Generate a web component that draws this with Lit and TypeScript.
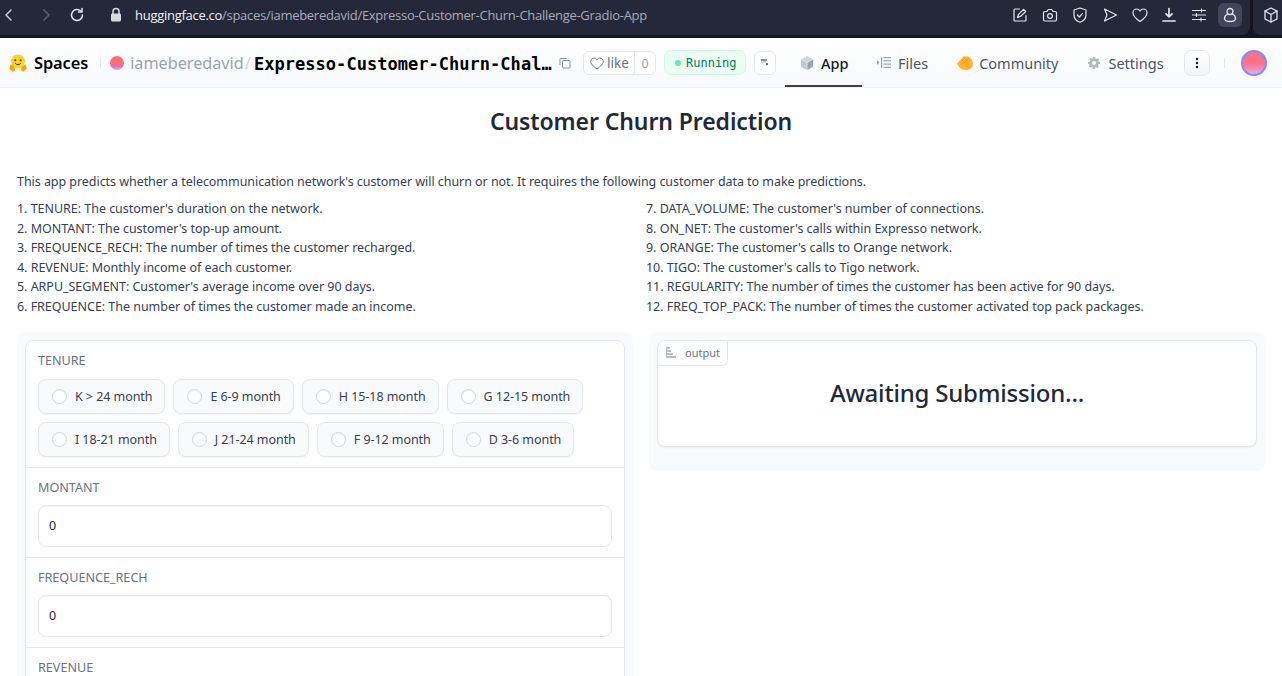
import { LitElement, html, css, svg } from "lit";
import { customElement } from "lit/decorators.js";

const stroke = (w: number, inner: unknown) => html`<svg class="ic" width="18" height="18" viewBox="0 0 18 18" fill="none" stroke="#e4e6ee" stroke-width="${w}" stroke-linecap="round" stroke-linejoin="round">${inner}</svg>`;

const TOOL_ICONS = [
  svg`<path d="M15 9.500V14a1 1 0 0 1-1 1H4a1 1 0 0 1-1-1V4a1 1 0 0 1 1-1h4.500"/><path d="M6.500 11.500l1-3 5-5.200 2.200 2.200-5.200 5-3 1z"/>`,
  svg`<path d="M2.500 7a1.500 1.500 0 0 1 1.500-1.500h2L7.300 3.500h3.400L12 5.500h2A1.500 1.500 0 0 1 15.500 7v6.500A1.500 1.500 0 0 1 14 15H4a1.500 1.500 0 0 1-1.500-1.500z"/><circle cx="9" cy="10" r="2.400"/>`,
  svg`<path d="M9 2l6 2v5c0 3.600-2.500 6-6 7.300C5.500 15 3 12.600 3 9V4z"/><path d="M6.400 9l2 2 3.200-3.600"/>`,
  svg`<path d="M3.500 3l12 6-12 6 2.500-6z"/>`,
  svg`<path d="M9 15.500C4.500 12.500 2 10 2 6.800 2 4.600 3.700 3 5.600 3 7 3 8.300 3.800 9 5c.7-1.200 2-2 3.400-2C14.300 3 16 4.600 16 6.800c0 3.200-2.500 5.700-7 8.700z"/>`,
  svg`<path d="M9 2.500v8M6 7.800L9 10.800l3-3" stroke-width="1.700"/><path d="M3 15h12" stroke-width="1.700"/>`,
  svg`<path d="M2.500 4.500h13M2.500 9h13M2.500 13.500h13"/><path d="M11.500 3v3M6.500 7.500v3M11 12v3"/>`,
];

const LEFT_ITEMS = [
  "1. TENURE: The customer's duration on the network.",
  "2. MONTANT: The customer's top-up amount.",
  "3. FREQUENCE_RECH: The number of times the customer recharged.",
  "4. REVENUE: Monthly income of each customer.",
  "5. ARPU_SEGMENT: Customer's average income over 90 days.",
  "6. FREQUENCE: The number of times the customer made an income.",
];
const RIGHT_ITEMS = [
  "7. DATA_VOLUME: The customer's number of connections.",
  "8. ON_NET: The customer's calls within Expresso network.",
  "9. ORANGE: The customer's calls to Orange network.",
  "10. TIGO: The customer's calls to Tigo network.",
  "11. REGULARITY: The number of times the customer has been active for 90 days.",
  "12. FREQ_TOP_PACK: The number of times the customer activated top pack packages.",
];
const RADIOS = [
  "K > 24 month", "E 6-9 month", "H 15-18 month", "G 12-15 month",
  "I 18-21 month", "J 21-24 month", "F 9-12 month", "D 3-6 month",
];

@customElement("app-root")
export class AppRoot extends LitElement {
  static styles = css`
    :host { display: block; height: 676px; overflow: hidden; background: #fff; font-family: "Noto Sans", sans-serif; color: #1f2937; font-size: 13px; }
    .chrome { height: 38px; background: #14151f; display: flex; }
    .bar { flex: 1; height: 35px; box-sizing: border-box; padding: 0 0 5px 1px; background: #252838; border-bottom-right-radius: 8px; display: flex; align-items: center; }
    .side { width: 29px; margin-left: 3px; height: 35px; box-sizing: border-box; padding: 0 0 5px 9px; background: #252838; border-bottom-left-radius: 8px; display: flex; align-items: center; }
    .nav { display: flex; align-items: center; justify-content: center; width: 16px; }
    .nav.fwd { margin-left: 21px; }
    .nav.reload { margin-left: 15px; }
    .nav.lock { margin-left: 23px; }
    .url { margin-left: 11px; font-family: "Open Sans", sans-serif; font-size: 13px; color: #a7abb8; white-space: nowrap; letter-spacing: -0.28px; flex: 1; }
    .url b { font-weight: 400; color: #f1f2f6; }
    .tools { display: flex; align-items: center; gap: 11.800px; margin-right: 8px; }
    .active { width: 24px; height: 24px; margin-left: -2px; border-radius: 6px; background: #42465c; display: flex; align-items: center; justify-content: center; }
    .ic { display: block; }

    .head { height: 49px; background: linear-gradient(#fff, #f8f9fb); border-bottom: 1px solid #f0f1f4; display: flex; align-items: center; padding-left: 9px; color: #4b5563; }
    .head > * { flex: none; }
    .spaces { margin-left: 7px; font-size: 16.400px; font-weight: 600; color: #000; letter-spacing: -0.1px; }
    .vr { width: 1px; height: 10px; background: #e5e7eb; }
    .vr.first { margin-left: 12px; }
    .owner-av { width: 14px; height: 14px; border-radius: 50%; background: linear-gradient(#fb6f6f 45%, #e36fa8 70%, #d9a5e8); margin-left: 9px; }
    .owner { margin-left: 6px; font-size: 16.200px; color: #9ca3af; }
    .slash { margin-left: 1px; font-size: 17px; color: #d1d5db; }
    .repo { margin: 3px 0 0 3px; width: 298px; overflow: hidden; text-overflow: ellipsis; white-space: nowrap; font-family: "DejaVu Sans Mono", monospace; font-weight: 700; font-size: 17px; color: #000; letter-spacing: 0.03px; }
    .copy { margin-left: 7px; }
    .like { margin: 1px 0 0 12px; height: 22px; width: 71px; border: 1px solid #e5e7eb; border-radius: 6px; display: flex; align-items: center; font-size: 13.500px; background: #fff; color: #6b7280; }
    .like .a { flex: 1; display: flex; align-items: center; gap: 3px; padding-left: 6px; border-right: 1px solid #e5e7eb; height: 100%; }
    .like .b { width: 20px; text-align: center; font-size: 12.500px; color: #9ca3af; }
    .run { margin-left: 8px; height: 23px; width: 70px; border: 1px solid #d1fae5; border-radius: 7px; background: #ecfdf5; display: flex; align-items: center; gap: 5px; padding-left: 10px; font-family: "DejaVu Sans Mono", monospace; font-size: 12px; color: #047857; white-space: nowrap; }
    .dot { width: 6px; height: 6px; border-radius: 50%; background: #6ee7b7; }
    .sq { margin: 1px 0 0 8px; width: 20px; height: 22px; border: 1px solid #e5e7eb; border-radius: 6px; background: #fff; display: flex; align-items: center; justify-content: center; }
    .tab { height: 49px; display: flex; align-items: center; font-size: 14.500px; color: #4b5563; position: relative; box-sizing: border-box; }
    .tab svg { flex: none; }
    .tab.app { margin-left: 9px; width: 77px; padding-left: 16px; gap: 8px; color: #111827; font-weight: 500; border-bottom: 2px solid #374151; padding-top: 2px; }
    .tab.files { margin-left: 15px; gap: 7px; }
    .tab.comm { margin-left: 29px; gap: 6px; }
    .tab.set { margin-left: 30px; gap: 8px; }
    .menu { margin-left: 20px; width: 24px; height: 24px; border: 1px solid #e5e7eb; border-radius: 7px; background: linear-gradient(#fff, #f3f4f6); display: flex; align-items: center; justify-content: center; }
    .vr2 { margin-left: 14px; }
    .me { margin-left: 16px; width: 22px; height: 22px; border-radius: 50%; border: 2px solid #818cf8; background: linear-gradient(#fb7185 50%, #f08ab4 75%, #d8b4f0); }

    main { padding: 0 17px; }
    h1 { margin: 0; padding-top: 17px; height: 37px; line-height: 32px; text-align: center; font-size: 23px; font-weight: 600; color: #1f2937; letter-spacing: -0.1px; }
    .intro { margin: 30px 0 0; height: 20px; line-height: 20px; font-size: 12.500px; color: #374151; letter-spacing: -0.05px; white-space: nowrap; }
    .cols { margin-top: 7px; display: grid; grid-template-columns: 629px 1fr; font-size: 12.500px; line-height: 19.600px; color: #374151; letter-spacing: -0.03px; white-space: nowrap; }
    .panels { margin-top: 15px; display: grid; grid-template-columns: 616px 616px; gap: 16px; align-items: start; }
    .panel { background: #f9fafb; border-radius: 8px; padding: 8px; }
    .panel.output { padding-bottom: 24px; }
    .card { background: #fff; border: 1px solid #e5e7eb; border-radius: 8px; }
    .field { padding: 11px 12px 10px; border-top: 1px solid #e5e7eb; }
    .field:first-child { border-top: 0; }
    .lab { font-size: 12.600px; line-height: 18px; color: #6b7280; margin-bottom: 8px; white-space: nowrap; }
    .field:first-child .lab { margin-bottom: 9px; }
    .radios { display: flex; flex-wrap: wrap; gap: 8px; }
    .pill { height: 35px; box-sizing: border-box; display: flex; align-items: center; gap: 8px; padding: 0 12px 0 13px; background: #f9fafb; border: 1px solid #e5e7eb; border-radius: 8px; box-shadow: 0 1px 1px rgba(0,0,0,.04); font-size: 12.500px; color: #374151; white-space: nowrap; letter-spacing: -0.06px; }
    .circle { width: 15px; height: 15px; box-sizing: border-box; border: 1px solid #d1d5db; border-radius: 50%; background: #fff; box-shadow: inset 0 1px 1px rgba(0,0,0,.05); }
    .input { height: 42px; box-sizing: border-box; border: 1px solid #e5e7eb; border-radius: 8px; padding: 0 10px; display: flex; align-items: center; font-size: 12.500px; color: #1f2937; box-shadow: inset 0 1px 2px rgba(0,0,0,.04); }
    .out { height: 105px; position: relative; box-shadow: 0 1px 2px rgba(0,0,0,.05); display: flex; justify-content: center; align-items: flex-start; }
    .tag { position: absolute; left: 0; top: 0; height: 25px; width: 70px; box-sizing: border-box; border-right: 1px solid #e5e7eb; border-bottom: 1px solid #e5e7eb; border-radius: 0 0 6px 0; display: flex; align-items: center; gap: 9px; padding-left: 8px; font-size: 11px; color: #6b7280; }
    .await { margin-top: 33px; line-height: 38px; font-size: 24px; font-weight: 500; color: #1f2937; letter-spacing: -0.2px; }
  `;

  render() {
    return html`
      <div class="chrome">
        <div class="bar">
          <span class="nav"><svg width="16" height="16" viewBox="0 0 16 16" fill="none" stroke="#c9ccd6" stroke-width="1.500" stroke-linecap="round" stroke-linejoin="round"><path d="M10 3L5 8l5 5"/></svg></span>
          <span class="nav fwd"><svg width="16" height="16" viewBox="0 0 16 16" fill="none" stroke="#5c6070" stroke-width="1.500" stroke-linecap="round" stroke-linejoin="round"><path d="M6 3l5 5-5 5"/></svg></span>
          <span class="nav reload"><svg width="16" height="16" viewBox="0 0 16 16" fill="none" stroke="#e4e6ee" stroke-width="1.500" stroke-linecap="round" stroke-linejoin="round"><path d="M13.500 8a5.500 5.500 0 1 1-1.700-4"/><path d="M13 1.500V5H9.500" /></svg></span>
          <span class="nav lock"><svg width="14" height="16" viewBox="0 0 14 16"><path d="M4 7V4.500a3 3 0 0 1 6 0V7" fill="none" stroke="#d9dbe3" stroke-width="1.500"/><rect x="2" y="6.500" width="10" height="8" rx="1.500" fill="#d9dbe3"/></svg></span>
          <span class="url"><b>huggingface.co</b>/spaces/iameberedavid/Expresso-Customer-Churn-Challenge-Gradio-App</span>
          <div class="tools">
            ${TOOL_ICONS.map((p) => stroke(1.2, p))}
            <span class="active">${stroke(1.3, svg`<circle cx="9" cy="5.500" r="3"/><path d="M6.800 8C4.500 9 3.500 10.500 3.500 12.500c0 2 1.500 3 5.500 3s5.500-1 5.500-3c0-2-1-3.500-3.300-4.500"/>`)}</span>
          </div>
        </div>
        <div class="side">${stroke(1.300, svg`<path d="M9 2l6 3v8l-6 3-6-3V5z"/><path d="M3 5l6 3.500L15 5M9 8.500V16"/>`)}</div>
      </div>

      <header class="head">
        <svg width="18" height="18" viewBox="0 0 18 18">
          <circle cx="9" cy="7.500" r="7" fill="#ffd21e"/>
          <circle cx="6.300" cy="6.300" r="1" fill="#32343d"/><circle cx="11.700" cy="6.300" r="1" fill="#32343d"/>
          <path d="M6.300 9.500c.8 1.500 4.600 1.500 5.400 0" fill="none" stroke="#32343d" stroke-width="1" stroke-linecap="round"/>
          <path d="M1.500 10.500l3.500 2 1.300 3.500-3 1.500-3-3zM16.500 10.500L13 12.500l-1.300 3.500 3 1.500 3-3z" fill="#ff9d0b"/>
        </svg>
        <span class="spaces">Spaces</span>
        <span class="vr first"></span>
        <span class="owner-av"></span>
        <span class="owner">iameberedavid</span>
        <span class="slash">/</span>
        <span class="repo">Expresso-Customer-Churn-Challenge-Gradio-App</span>
        <svg class="copy" width="12" height="12" viewBox="0 0 12 12" fill="none" stroke="#8b919c" stroke-width="1"><path d="M1 8V1.500h6.500"/><rect x="3.500" y="3.500" width="7.500" height="7.500" rx=".5"/></svg>
        <div class="like">
          <span class="a"><svg width="14" height="13" viewBox="0 0 14 13" fill="none" stroke="#6b7280" stroke-width="1"><path d="M7 12C3 9 .8 7 .8 4.300.8 2.500 2.200 1 4 1c1.300 0 2.400.7 3 1.800C7.600 1.700 8.700 1 10 1c1.800 0 3.200 1.500 3.200 3.300C13.200 7 11 9 7 12z"/></svg>like</span>
          <span class="b">0</span>
        </div>
        <div class="run"><span class="dot"></span>Running</div>
        <div class="sq"><svg width="8" height="8" viewBox="0 0 8 8"><rect x="0" y="0" width="6" height="2" fill="#8b919c"/><rect x="0" y="2" width="5" height="2" fill="#d1d5db"/><rect x="5" y="4" width="2" height="2" fill="#6b7280"/></svg></div>
        <div class="tab app">
          <svg width="12" height="14" viewBox="0 0 12 14"><path d="M6 0l6 3.200L6 6.500 0 3.200z" fill="#d1d5db"/><path d="M0 3.500l5.700 3.200V14L0 10.700z" fill="#c4c8cf"/><path d="M12 3.500L6.300 6.700V14l5.700-3.300z" fill="#9ca3af"/></svg>
          App
        </div>
        <div class="tab files">
          <svg width="14" height="11" viewBox="0 0 14 11" fill="#9ca3af"><path d="M0 3l2.500 2.500L0 8z"/><rect x="4" y="0" width="1.200" height="11"/><rect x="6.500" y="0" width="7.500" height="1.200"/><rect x="6.500" y="3.200" width="7.500" height="1.200"/><rect x="6.500" y="6.500" width="7.500" height="1.200"/><rect x="6.500" y="9.800" width="7.500" height="1.200"/></svg>
          Files
        </div>
        <div class="tab comm">
          <svg width="16" height="14" viewBox="0 0 16 14"><path d="M1 6.500L5.500 1.500c1-1 2.500-1.500 3.500-1 1-.3 3 0 4 1.200 1.500 1.500 3 3.800 3 6 0 3.300-3 6.300-7.500 6.300-3 0-4.500-1-6-2.800L.8 9C0 8 .2 7.300 1 6.500z" fill="#ffb22e"/><path d="M5 5l3-3M7 7l4-4M4 8.500l2.500-2" stroke="#e58a00" stroke-width=".7" fill="none"/></svg>
          Community
        </div>
        <div class="tab set">
          <svg width="12" height="12" viewBox="0 0 12 12"><path fill-rule="evenodd" fill="#b4b8c0" d="M5 0h2l.3 1.600 1.100.5L9.800 1.200l1.400 1.400-.9 1.400.5 1.100L12 5v2l-1.600.3-.5 1.100.9 1.400-1.400 1.400-1.400-.9-1.100.5L7 12H5l-.3-1.600-1.100-.5-1.400.9-1.400-1.400.9-1.400-.5-1.100L0 7V5l1.600-.3.5-1.100-.9-1.400 1.400-1.400 1.400.9 1.100-.5zM6 4a2 2 0 1 0 0 4 2 2 0 0 0 0-4z"/></svg>
          Settings
        </div>
        <div class="menu"><svg width="4" height="12" viewBox="0 0 4 12" fill="#111827"><circle cx="2" cy="2" r="1.200"/><circle cx="2" cy="6" r="1.200"/><circle cx="2" cy="10" r="1.200"/></svg></div>
        <span class="vr vr2"></span>
        <span class="me"></span>
      </header>

      <main>
        <h1>Customer Churn Prediction</h1>
        <p class="intro">This app predicts whether a telecommunication network's customer will churn or not. It requires the following customer data to make predictions.</p>
        <div class="cols">
          <div>${LEFT_ITEMS.map((t) => html`<div>${t}</div>`)}</div>
          <div>${RIGHT_ITEMS.map((t) => html`<div>${t}</div>`)}</div>
        </div>
        <div class="panels">
          <section class="panel">
            <div class="card">
              <div class="field">
                <div class="lab">TENURE</div>
                <div class="radios">
                  ${RADIOS.map((r) => html`<span class="pill"><span class="circle"></span>${r}</span>`)}
                </div>
              </div>
              ${["MONTANT", "FREQUENCE_RECH", "REVENUE"].map(
                (l) => html`<div class="field"><div class="lab">${l}</div><div class="input">0</div></div>`
              )}
            </div>
          </section>
          <section class="panel output">
            <div class="card out">
              <div class="tag">
                <svg width="10" height="11" viewBox="0 0 10 11" fill="#b9bdc5"><rect x="0" y="0" width="1" height="11"/><rect x="1" y="0" width="3" height="2"/><rect x="1" y="3" width="4" height="2"/><rect x="1" y="6" width="6" height="2"/><rect x="1" y="9" width="9" height="2"/></svg>
                output
              </div>
              <div class="await">Awaiting Submission...</div>
            </div>
          </section>
        </div>
      </main>
    `;
  }
}
